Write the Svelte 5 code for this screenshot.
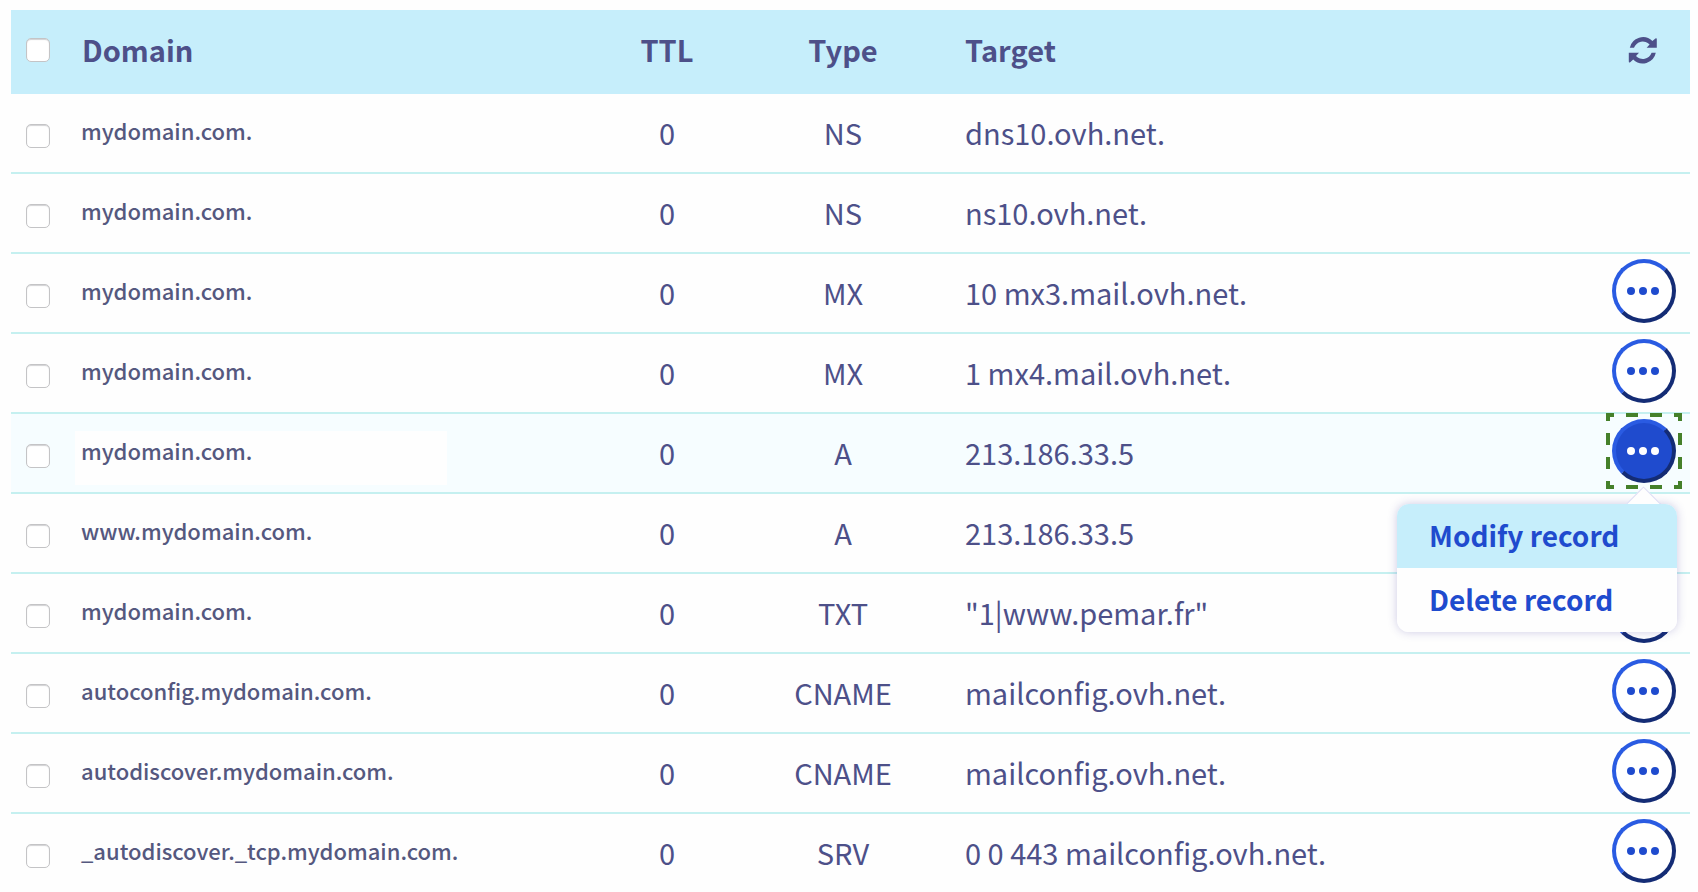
<script lang="ts">
  type DnsRecord = {
    domain: string;
    ttl: number;
    type: string;
    target: string;
    editable: boolean;
  };

  const records: DnsRecord[] = [
    { domain: 'mydomain.com.', ttl: 0, type: 'NS', target: 'dns10.ovh.net.', editable: false },
    { domain: 'mydomain.com.', ttl: 0, type: 'NS', target: 'ns10.ovh.net.', editable: false },
    { domain: 'mydomain.com.', ttl: 0, type: 'MX', target: '10 mx3.mail.ovh.net.', editable: true },
    { domain: 'mydomain.com.', ttl: 0, type: 'MX', target: '1 mx4.mail.ovh.net.', editable: true },
    { domain: 'mydomain.com.', ttl: 0, type: 'A', target: '213.186.33.5', editable: true },
    { domain: 'www.mydomain.com.', ttl: 0, type: 'A', target: '213.186.33.5', editable: true },
    { domain: 'mydomain.com.', ttl: 0, type: 'TXT', target: '"1|www.pemar.fr"', editable: true },
    { domain: 'autoconfig.mydomain.com.', ttl: 0, type: 'CNAME', target: 'mailconfig.ovh.net.', editable: true },
    { domain: 'autodiscover.mydomain.com.', ttl: 0, type: 'CNAME', target: 'mailconfig.ovh.net.', editable: true },
    { domain: '_autodiscover._tcp.mydomain.com.', ttl: 0, type: 'SRV', target: '0 0 443 mailconfig.ovh.net.', editable: true },
  ];

  let openRow = $state(4);
  let selected = $state(records.map(() => false));

  function toggleMenu(i: number) {
    openRow = openRow === i ? -1 : i;
  }

  function toggleAll(e: Event) {
    const checked = (e.currentTarget as HTMLInputElement).checked;
    selected = records.map(() => checked);
  }
</script>

<div class="zone">
  <table>
    <colgroup>
      <col class="col-check" />
      <col class="col-domain" />
      <col class="col-mid" />
      <col class="col-mid" />
      <col />
      <col class="col-actions" />
    </colgroup>
    <thead>
      <tr>
        <th class="check"><input type="checkbox" aria-label="Select all" onchange={toggleAll} /></th>
        <th class="domain">Domain</th>
        <th class="mid">TTL</th>
        <th class="mid">Type</th>
        <th class="target">Target</th>
        <th class="actions">
          <button class="refresh" aria-label="Refresh">
            <svg width="28" height="28" viewBox="0 0 28 28" fill="currentColor">
              <path d="M.8 10.8A13.4 13.4 0 0 1 23.4 4.1L26.4 1.4Q27.8.6 27.8 2.2V10.8H17.6L20.6 7.6A9.3 9.3 0 0 0 5 10.8Z" />
              <path d="M26.8 15.8A13.4 13.4 0 0 1 4.2 22.5L1.2 25.2Q-.2 26-.2 24.4V15.8H10L7 19A9.3 9.3 0 0 0 22.6 15.8Z" />
            </svg>
          </button>
        </th>
      </tr>
    </thead>
    <tbody>
      {#each records as record, i}
        <tr class:active={openRow === i}>
          <td class="check">
            <input type="checkbox" aria-label="Select {record.domain} {record.type}" bind:checked={selected[i]} />
          </td>
          <td class="domain"><span>{record.domain}</span></td>
          <td class="mid">{record.ttl}</td>
          <td class="mid">{record.type}</td>
          <td class="target">{record.target}</td>
          <td class="actions">
            {#if record.editable}
              <div class="dropdown">
                <button
                  class="more"
                  class:open={openRow === i}
                  aria-label="Actions"
                  aria-expanded={openRow === i}
                  onclick={() => toggleMenu(i)}
                >
                  <svg width="32" height="8" viewBox="0 0 32 8" fill="currentColor">
                    <circle cx="3" cy="4" r="4" />
                    <circle cx="15" cy="4" r="4" />
                    <circle cx="27" cy="4" r="4" />
                  </svg>
                </button>
                {#if openRow === i}
                  <svg class="focus-ring" width="76" height="76" viewBox="0 0 76 76">
                    <path d="M0 2H76M0 74H76M2 0V76M74 0V76" />
                  </svg>
                  <div class="menu">
                    <button class="menu-item current">Modify record</button>
                    <button class="menu-item">Delete record</button>
                  </div>
                {/if}
              </div>
            {/if}
          </td>
        </tr>
      {/each}
    </tbody>
  </table>
</div>

<style>
  :global(body) {
    background: #fefefe;
  }

  .zone {
    --text: #4d5089;
    --blue: #1f4bce;
    --pale: #c6eefb;
    padding: 10px 8px 0 11px;
    font-family: 'Noto Sans CJK SC', 'Noto Sans', sans-serif;
    font-size: 29px;
    line-height: 40px;
    color: var(--text);
  }

  table {
    width: 100%;
    table-layout: fixed;
    border-collapse: separate;
    border-spacing: 0;
  }

  .col-check {
    width: 54px;
  }

  .col-domain {
    width: 514px;
  }

  .col-mid {
    width: 176px;
  }

  .col-actions {
    width: 80px;
  }

  th,
  td {
    box-sizing: border-box;
    padding: 0;
    text-align: left;
    vertical-align: middle;
  }

  th {
    height: 84px;
    padding-bottom: 6px;
    background: var(--pale);
    font-weight: 700;
  }

  td {
    height: 80px;
    padding-bottom: 2px;
    border-bottom: 2px solid #c5f0f0;
  }

  tr:last-child td {
    height: 78px;
    border-bottom: 0;
  }

  tr.active td {
    background: #f6fdff;
  }

  .check {
    padding-left: 15px;
    line-height: 0;
  }

  th.check {
    padding-bottom: 4px;
  }

  td.check {
    padding-top: 8px;
  }

  th.domain {
    padding-left: 17px;
  }

  td.domain {
    padding: 10px 0 0 10px;
    font-size: 22px;
    line-height: 34px;
    font-weight: 500;
    color: #55587f;
  }

  td.domain span {
    display: block;
    max-width: 366px;
    padding: 2px 0 18px 6px;
  }

  .active td.domain span {
    background: #fefefe;
  }

  th.mid,
  td.mid {
    text-align: center;
  }

  .target {
    padding-left: 34px;
  }

  input[type='checkbox'] {
    appearance: none;
    box-sizing: border-box;
    width: 24px;
    height: 24px;
    margin: 0;
    border: 1px solid #c4c4c6;
    border-radius: 5px;
    background: #fff;
    box-shadow: inset 0 1px 1px #d2d2d4;
  }

  input[type='checkbox']:checked {
    background: var(--blue);
  }

  button {
    margin: 0;
    padding: 0;
    border: 0;
    background: none;
    font: inherit;
    color: inherit;
    cursor: pointer;
  }

  th.actions {
    padding-bottom: 2px;
  }

  .refresh {
    display: block;
    margin-left: 19px;
    line-height: 0;
  }

  .refresh svg {
    overflow: visible;
  }

  td.actions {
    padding: 5px 0 0 2px;
    vertical-align: top;
  }

  .dropdown {
    position: relative;
    width: 64px;
    height: 64px;
  }

  .more {
    display: flex;
    align-items: center;
    justify-content: center;
    box-sizing: border-box;
    width: 64px;
    height: 64px;
    border: 4px solid;
    border-color: #2a5be2 #142c75 #142c75 #2a5be2;
    border-radius: 50%;
    background: #fff;
    color: var(--blue);
  }

  .more svg {
    overflow: visible;
  }

  .more.open {
    background: var(--blue);
    color: #fff;
  }

  .focus-ring {
    position: absolute;
    top: -6px;
    left: -6px;
    fill: none;
    stroke: #45802a;
    stroke-width: 4;
    stroke-dasharray: 8 12 12 12 12 12 8 0;
    pointer-events: none;
  }

  .menu {
    position: absolute;
    z-index: 1;
    top: 85px;
    right: -1px;
    width: 280px;
    border-radius: 12px;
    background: #fefefe;
    box-shadow: 0 0 10px rgba(60, 50, 150, 0.25);
  }

  .menu::before {
    content: '';
    position: absolute;
    top: -12px;
    right: 20px;
    z-index: -1;
    width: 25px;
    height: 25px;
    border: 1px solid #dcdcf4;
    background: #fefefe;
    transform: rotate(45deg);
  }

  .menu-item {
    display: block;
    width: 100%;
    height: 64px;
    padding: 0 0 2px 32px;
    border-radius: 0 0 12px 12px;
    background: #fefefe;
    text-align: left;
    font-size: 28px;
    font-weight: 700;
    color: var(--blue);
  }

  .menu-item.current {
    border-radius: 12px 12px 0 0;
    background: var(--pale);
  }
</style>
